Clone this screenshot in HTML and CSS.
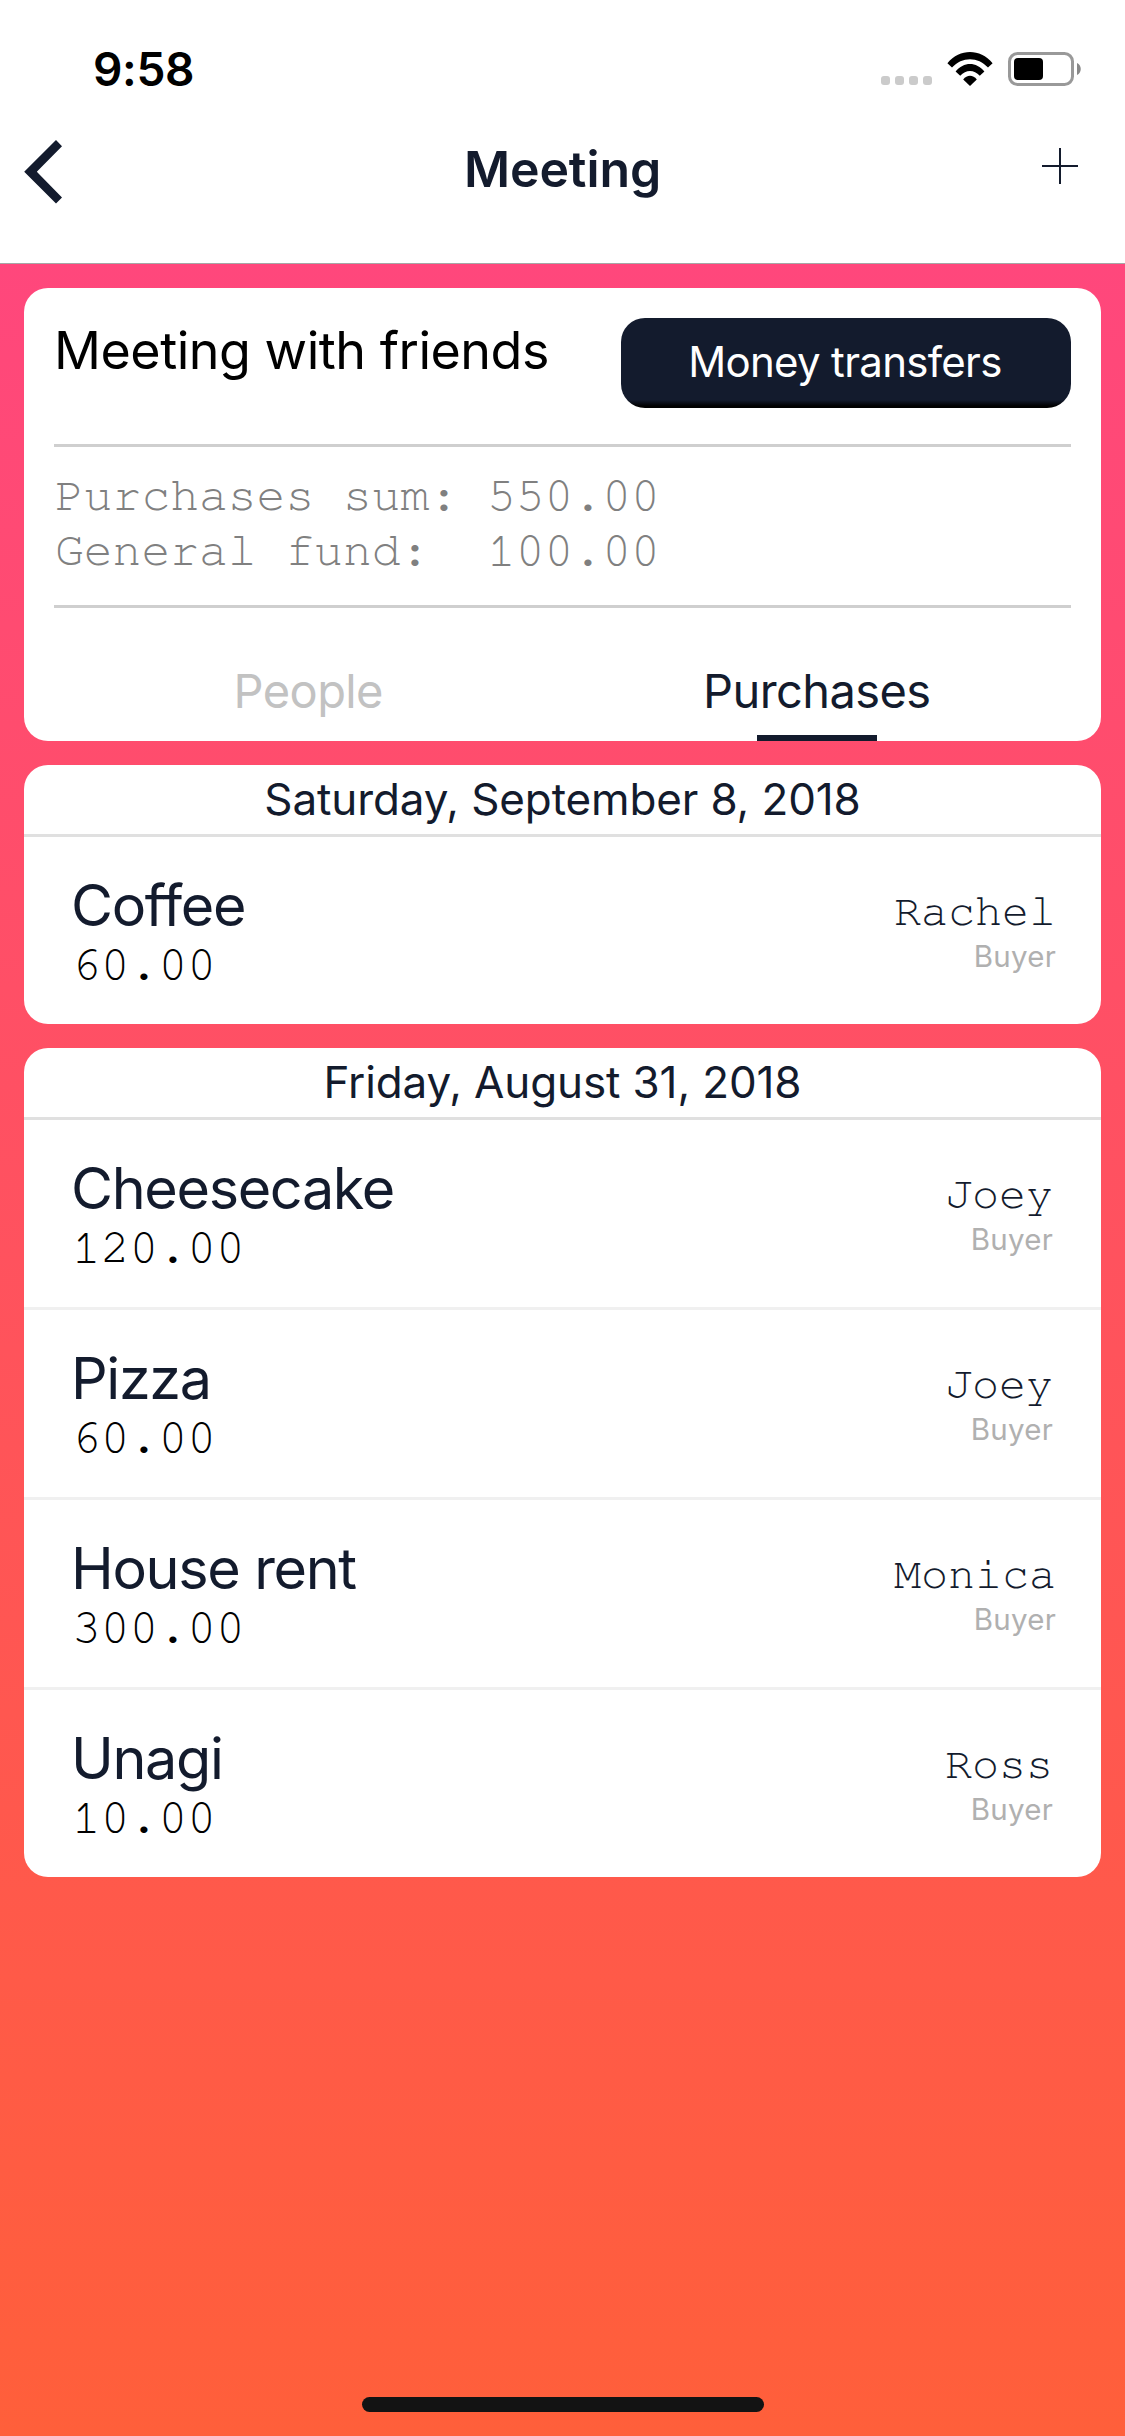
FILE: index.html
```html
<!DOCTYPE html>
<html lang="en">
<head>
<meta charset="utf-8">
<title>Meeting</title>
<link rel="stylesheet" href="styles.css">
</head>
<body>
<div class="screen">
  <header class="header">
    <div class="status-bar">
      <span class="time">9:58</span>
      <div class="status-icons">
        <div class="signal"><i></i><i></i><i></i><i></i></div>
        <svg class="wifi" width="46" height="34" viewBox="0 0 46 34">
          <path d="M0.4 11.2C13 -3.6 33 -3.6 45.6 11.2L41 15.6C31 4.4 15 4.4 5 15.6Z"/>
          <path d="M8.6 19.4C16.6 9.4 29.4 9.4 37.4 19.4L32.8 23.8C27 17.4 19 17.4 13.2 23.8Z"/>
          <path d="M16.2 27.4C20 22.6 26 22.6 29.8 27.4L23 34Z"/>
        </svg>
        <svg class="battery" width="74" height="34" viewBox="0 0 74 34">
          <rect x="1.5" y="1.5" width="63" height="31" rx="8" fill="none" stroke="#999" stroke-width="3"/>
          <rect x="6" y="6" width="29" height="22" rx="4"/>
          <path d="M69 11C74 13 74 21 69 23Z" fill="#888"/>
        </svg>
      </div>
    </div>
    <nav class="nav">
      <svg class="back" width="39" height="64" viewBox="0 0 39 64"><path d="M32 0L38 6.2L12.8 31.8L38 57.6L32 63.6L0.2 31.8Z"/></svg>
      <h1 class="nav-title">Meeting</h1>
      <svg class="add" width="36" height="36" viewBox="0 0 36 36"><path d="M17 0H19V36H17ZM0 17H36V19H0Z"/></svg>
    </nav>
  </header>

  <main class="content">
    <section class="card summary">
      <div class="summary-top">
        <h2 class="summary-title">Meeting with friends</h2>
        <button class="button" type="button">Money transfers</button>
      </div>
      <pre class="totals">Purchases sum: 550.00
General fund:  100.00</pre>
      <div class="tabs">
        <div class="tab">People</div>
        <div class="tab active">Purchases</div>
      </div>
    </section>

    <section class="card">
      <h3 class="date">Saturday, September 8, 2018</h3>
      <div class="row">
        <div class="item"><div class="name">Coffee</div><div class="price">60.00</div></div>
        <div class="buyer"><div class="person">Rachel</div><div class="role">Buyer</div></div>
      </div>
    </section>

    <section class="card">
      <h3 class="date">Friday, August 31, 2018</h3>
      <div class="row">
        <div class="item"><div class="name">Cheesecake</div><div class="price">120.00</div></div>
        <div class="buyer short"><div class="person">Joey</div><div class="role">Buyer</div></div>
      </div>
      <div class="row">
        <div class="item"><div class="name">Pizza</div><div class="price">60.00</div></div>
        <div class="buyer short"><div class="person">Joey</div><div class="role">Buyer</div></div>
      </div>
      <div class="row">
        <div class="item"><div class="name">House rent</div><div class="price">300.00</div></div>
        <div class="buyer"><div class="person">Monica</div><div class="role">Buyer</div></div>
      </div>
      <div class="row">
        <div class="item"><div class="name">Unagi</div><div class="price">10.00</div></div>
        <div class="buyer short"><div class="person">Ross</div><div class="role">Buyer</div></div>
      </div>
    </section>
  </main>
  <div class="home-indicator"></div>
</div>
</body>
</html>
```
FILE: styles.css
```css
* { box-sizing: border-box; margin: 0; padding: 0; }

body {
  font-family: Inter, "Liberation Sans", sans-serif;
  color: #131b2d;
}

.screen {
  width: 1125px;
  height: 2436px;
  display: flex;
  flex-direction: column;
  background: linear-gradient(#ff477c, #ff5f3a) 0 264px / 100% 2172px no-repeat;
}

.header {
  height: 264px;
  background: #fff;
  border-bottom: 1px solid #a6a6a6;
}

.status-bar {
  height: 138px;
  padding: 0 43px 0 93px;
  display: flex;
  align-items: center;
  justify-content: space-between;
}

.time {
  font-size: 46px;
  line-height: 60px;
  font-weight: 600;
  letter-spacing: -0.3px;
  color: #000;
}

.status-icons { display: flex; align-items: center; }
.signal { display: flex; gap: 5px; margin: 23px 15px 0 0; }
.signal i { width: 9px; height: 9px; border-radius: 3px; background: #cbcbcb; }
.wifi { margin-right: 15px; }

.nav {
  height: 62px;
  padding: 0 47px 0 24px;
  display: grid;
  grid-template-columns: 1fr auto 1fr;
  grid-template-rows: 62px;
  align-items: center;
  fill: #131b2d;
}

.back { margin-top: 5px; }

.nav-title {
  font-size: 50px;
  line-height: 62px;
  font-weight: 600;
  letter-spacing: -0.1px;
  padding-left: 23px;
}

.add { justify-self: end; margin-top: -6px; }

.content {
  flex: 1;
  padding: 24px 24px 0;
  display: flex;
  flex-direction: column;
  gap: 24px;
}

.card {
  background: #fff;
  border-radius: 24px;
  overflow: hidden;
}

.summary { padding: 30px 30px 0; }

.summary-top {
  display: flex;
  align-items: flex-start;
  justify-content: space-between;
  padding-bottom: 36px;
}

.summary-title {
  font-size: 52px;
  line-height: 66px;
  font-weight: 400;
  letter-spacing: -0.48px;
  color: #000;
}

.button {
  width: 450px;
  height: 90px;
  padding: 0 2px 3px 0;
  border: 0;
  border-radius: 24px;
  background: linear-gradient(#131b2d 82px, #000 88px);
  color: #fff;
  font: 400 42px/60px Inter, "Liberation Sans", sans-serif;
  letter-spacing: -0.7px;
}

.totals {
  height: 164px;
  padding: 22px 0 0 1px;
  border: solid #cfcfcf;
  border-width: 3px 0;
  font: 48px/55px FreeMono, "Liberation Mono", monospace;
  color: #808080;
}

.tabs { display: flex; height: 133px; padding-top: 53px; }

.tab {
  flex: 1;
  display: flex;
  flex-direction: column;
  align-items: center;
  justify-content: space-between;
  font-size: 47px;
  line-height: 60px;
  letter-spacing: -0.6px;
  color: #c2c2c2;
}

.tab.active { color: #131b2d; }
.tab.active::after { content: ""; width: 120px; height: 6px; background: #131b2d; }

.date {
  height: 72px;
  border-bottom: 3px solid #e0e0e0;
  font-size: 44px;
  line-height: 69px;
  font-weight: 400;
  letter-spacing: -0.12px;
  text-align: center;
}

.row {
  height: 187px;
  padding: 0 45px 0 47px;
  display: flex;
  justify-content: space-between;
}

.row + .row { height: 190px; border-top: 3px solid #f0f0f0; }

.item { padding-top: 36px; }

.name {
  font-size: 57.5px;
  line-height: 64px;
  letter-spacing: -1.35px;
}

.price {
  padding-left: 1px;
  font: 48px/56px FreeMono, "Liberation Mono", monospace;
  color: #000;
}

.buyer { padding-top: 50px; text-align: right; }
.buyer.short { padding-right: 3px; }
.person { font: 45px/50px FreeMono, "Liberation Mono", monospace; }
.role { font-size: 29.5px; line-height: 38px; letter-spacing: 0.26px; color: #b0b0b0; }

.home-indicator {
  width: 402px;
  height: 15px;
  margin: 0 auto 24px;
  border-radius: 8px;
  background: #131313;
}
```
